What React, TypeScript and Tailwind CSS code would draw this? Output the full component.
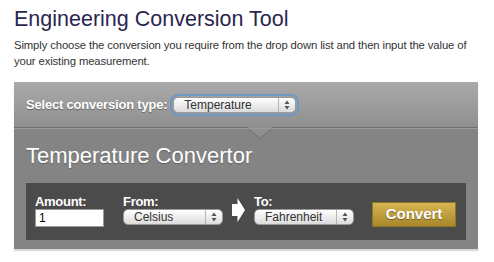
const font = "font-['Liberation_Sans',Arial,Helvetica,sans-serif]";

function Stepper() {
  return (
    <span className="flex h-full items-center border-l border-[#b5b5b5] px-[5px]">
      <svg width="6" height="10" viewBox="0 0 6 10">
        <path d="M3 0.5 L5.5 4 L0.5 4 Z" fill="#555" />
        <path d="M3 9.5 L5.5 6 L0.5 6 Z" fill="#555" />
      </svg>
    </span>
  );
}

function MacSelect({ value, width }: { value: string; width: string }) {
  return (
    <div
      className={`flex h-[16px] items-center justify-between rounded-[5px] border border-[#9a9a9a] bg-gradient-to-b from-white to-[#dcdcdc] text-[12px] leading-none text-[#333] ${width}`}
    >
      <span className="pl-[10px]">{value}</span>
      <Stepper />
    </div>
  );
}

export default function App() {
  return (
    <div className={`h-[262px] w-[494px] overflow-hidden bg-white ${font}`}>
      <div className="px-[14px] pt-[7px]">
        <h1 className="text-[21.5px] leading-[24px] text-[#2a2650]">Engineering Conversion Tool</h1>
        <p className="mt-[7px] text-[11.3px] leading-[15.5px] tracking-[-0.12px] text-[#333]">
          Simply choose the conversion you require from the drop down list and then input the value of your existing measurement.
        </p>
      </div>

      <div className="ml-[14px] mt-[13px] w-[464px] border-b border-[#d8d8d8] shadow-[0_1px_1px_rgba(0,0,0,0.15)]">
        {/* select bar */}
        <div className="flex h-[45px] items-center gap-[5px] bg-gradient-to-b from-[#aaaaaa] to-[#8f8f8f] px-[12px]">
          <span className="text-[13px] font-bold tracking-[-0.2px] text-white [text-shadow:0_1px_1px_rgba(0,0,0,0.35)]">Select conversion type:</span>
          <div className="rounded-[6px] p-[1px] shadow-[0_0_0_2px_#6d98c4]">
            <MacSelect value="Temperature" width="w-[123px]" />
          </div>
        </div>

        {/* converter */}
        <div className="relative border-t border-[#6f6f6f] bg-[#848484] px-[12px] pb-[9px] pt-[16px]">
          <div className="absolute left-[232px] top-[-1px] h-0 w-0 border-x-[14px] border-t-[12px] border-x-transparent border-t-[#6f6f6f]" />
          <div className="absolute left-[233px] top-[-1px] h-0 w-0 border-x-[13px] border-t-[11px] border-x-transparent border-t-[#8f8f8f]" />
          <div className="absolute inset-x-0 top-0 h-px bg-[#9a9a9a]" />
          <h2 className="text-[22px] leading-[24px] text-white [text-shadow:0_1px_1px_rgba(0,0,0,0.25)]">Temperature Convertor</h2>
          <div className="mt-[15px] flex h-[57px] items-start bg-[#4b4b4b] pl-[9px] pt-[11px]">
            <div className="flex w-[88px] flex-col">
              <span className="text-[13px] font-bold leading-[15px] tracking-[-0.3px] text-white">Amount:</span>
              <div className="h-[18px] w-[69px] border border-[#999] bg-white pl-[3px] text-[12px] leading-[16px] text-black">1</div>
            </div>
            <div className="flex flex-col">
              <span className="text-[13px] font-bold leading-[15px] tracking-[-0.3px] text-white">From:</span>
              <MacSelect value="Celsius" width="w-[100px]" />
            </div>
            <svg width="13" height="24" viewBox="0 0 13 24" className="ml-[9px] mt-[4px]">
              <path d="M0 6 H5.5 V0 L13 12 L5.5 24 V18 H0 Z" fill="#fff" />
            </svg>
            <div className="ml-[9px] flex flex-col">
              <span className="text-[13px] font-bold leading-[15px] tracking-[-0.3px] text-white">To:</span>
              <MacSelect value="Fahrenheit" width="w-[100px]" />
            </div>
            <button className="ml-[18px] mt-[8px] h-[25px] w-[84px] border border-[#8f7526] bg-gradient-to-b from-[#d6b652] to-[#a8872a] text-[15px] font-bold text-white [text-shadow:0_1px_1px_rgba(0,0,0,0.4)]">
              Convert
            </button>
          </div>
        </div>
      </div>
    </div>
  );
}
